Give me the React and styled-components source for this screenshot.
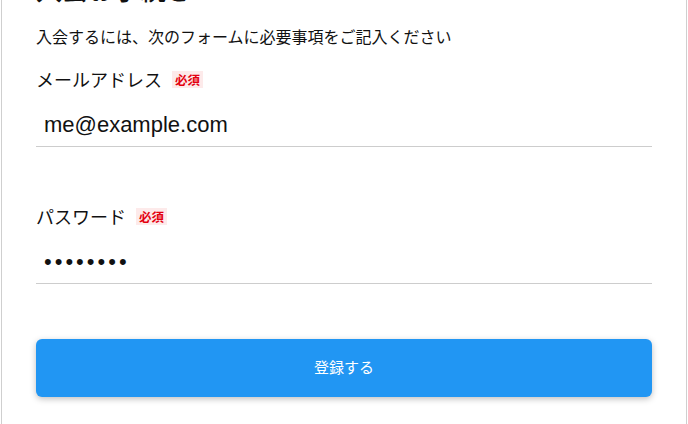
import styled, { createGlobalStyle } from "styled-components";

const GlobalStyle = createGlobalStyle`
  html, body {
    margin: 0;
    padding: 0;
    background: #fff;
  }
  body {
    font-family: "Noto Sans CJK JP", "Noto Sans", sans-serif;
    color: #111;
  }
`;

const Page = styled.div`
  height: 424px;
  overflow: hidden;
  background: #fff;
`;

const Card = styled.div`
  margin: -46px 1px 0 1px;
  padding: 18px 34px 40px;
  border: 1px solid #cfcfcf;
  background: #fff;
`;

const Heading = styled.h1`
  margin: 0;
  font-size: 26px;
  line-height: 32px;
  font-weight: 500;
`;

const Lead = styled.p`
  margin: 19px 0 0;
  font-size: 16px;
  line-height: 24px;
`;

const Field = styled.div`
  margin-top: ${(p) => p.$gap}px;
`;

const LabelRow = styled.label`
  display: flex;
  align-items: center;
  gap: 10px;
  height: 24px;
  font-size: 18px;
`;

const Required = styled.span`
  padding: 0 3px;
  font-size: 12.5px;
  line-height: 17px;
  font-weight: 700;
  color: #e3000f;
  background: #fdeaea;
`;

const Input = styled.input`
  display: block;
  box-sizing: border-box;
  width: 100%;
  height: 44px;
  margin-top: 12px;
  padding: 0 8px;
  border: none;
  border-bottom: 1px solid #cdcdcd;
  outline: none;
  background: transparent;
  font-family: "Liberation Sans", Arial, sans-serif;
  font-size: 22px;
  color: #111;
  letter-spacing: ${(p) => (p.type === "password" ? "3px" : "normal")};
`;

const Submit = styled.button`
  display: block;
  width: 100%;
  height: 58px;
  margin-top: 55px;
  padding: 0 0 4px;
  border: none;
  border-radius: 6px;
  background: #2196f3;
  color: #fff;
  font-family: "Noto Sans CJK JP", sans-serif;
  font-size: 15px;
  box-shadow: 0 2px 6px rgba(0, 0, 0, 0.25);
  cursor: pointer;
`;

export default function App() {
  return (
    <Page>
      <GlobalStyle />
      <Card>
        <Heading>入会お手続き</Heading>
        <Lead>入会するには、次のフォームに必要事項をご記入ください</Lead>
        <Field $gap={19}>
          <LabelRow htmlFor="email">
            メールアドレス
            <Required>必須</Required>
          </LabelRow>
          <Input id="email" type="email" defaultValue="me@example.com" />
        </Field>
        <Field $gap={57}>
          <LabelRow htmlFor="password">
            パスワード
            <Required>必須</Required>
          </LabelRow>
          <Input id="password" type="password" defaultValue="password" />
        </Field>
        <Submit type="button">登録する</Submit>
      </Card>
    </Page>
  );
}
